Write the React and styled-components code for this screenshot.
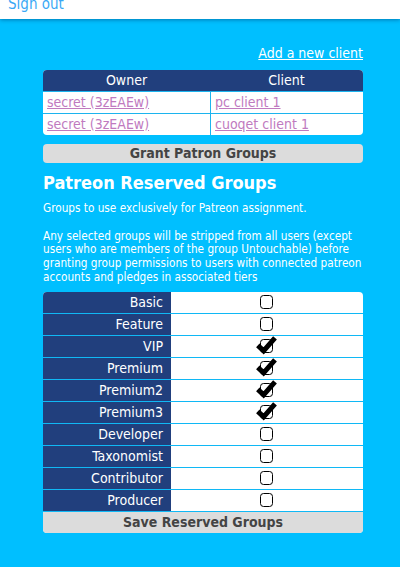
import React from "react";
import styled, { createGlobalStyle } from "styled-components";

const GlobalStyle = createGlobalStyle`
  html, body {
    margin: 0;
    padding: 0;
    background: #00bfff;
    font-family: "DejaVu Sans Condensed", "DejaVu Sans", sans-serif;
  }
`;

const Page = styled.div`
  min-height: 567px;
  background: #00bfff;
`;

const TopBar = styled.div`
  height: 19px;
  background: #ffffff;
  overflow: hidden;
  box-shadow: 0 1px 4px rgba(0, 40, 90, 0.45);
  position: relative;
`;

const SignOut = styled.a`
  display: block;
  margin-top: -5px;
  padding-left: 8px;
  font-size: 15px;
  line-height: 18px;
  color: #3aa8f5;
  text-decoration: none;
`;

const Main = styled.main`
  width: 320px;
  margin-left: 43px;
  padding-top: 26px;
`;

const LinkRow = styled.div`
  text-align: right;
  font-size: 14px;
  line-height: 17px;
  margin-bottom: 8px;
`;

const WhiteLink = styled.a`
  color: #ffffff;
  text-decoration: underline;
`;

const ClientTable = styled.div`
  display: grid;
  grid-template-columns: 167px 1fr;
  background: #ffffff;
  border-radius: 4px;
  overflow: hidden;
`;

const HeadCell = styled.div`
  background: #213f7d;
  color: #ffffff;
  height: 21px;
  font-size: 14px;
  line-height: 21px;
  text-align: center;
`;

const Cell = styled.div`
  height: 21px;
  line-height: 21px;
  font-size: 14px;
  padding-left: 4px;
  border-top: 1px solid #1cb4ee;
  border-left: ${(p) => (p.$divider ? "1px solid #1cb4ee" : "none")};
  white-space: nowrap;
`;

const PurpleLink = styled.a`
  color: #c07ac0;
  text-decoration: underline;
`;

const GrayButton = styled.button`
  display: block;
  width: 100%;
  height: 19px;
  margin-top: 9px;
  padding: 0;
  border: none;
  border-radius: 4px;
  background: #dcdcdc;
  color: #444444;
  font-family: inherit;
  font-weight: bold;
  font-size: 14px;
  line-height: 19px;
  text-align: center;
`;

const Heading = styled.h2`
  margin: 9px 0 0;
  font-size: 18px;
  line-height: 22px;
  font-weight: bold;
  color: #ffffff;
`;

const Description = styled.p`
  margin: 8px 0 0;
  color: #ffffff;
  font-size: 11.7px;
  line-height: 13.8px;
  white-space: nowrap;
`;

const GroupTable = styled.form`
  margin-top: 7px;
  background: #ffffff;
  border-radius: 4px;
  overflow: hidden;
`;

const GroupRow = styled.div`
  display: grid;
  grid-template-columns: 128px 1fr;
  height: 21px;
  border-top: ${(p) => (p.$first ? "none" : "1px solid #10b8f5")};
`;

const GroupLabel = styled.div`
  background: #213f7d;
  color: #ffffff;
  font-size: 14px;
  line-height: 21px;
  text-align: right;
  padding-right: 8px;
`;

const GroupCheck = styled.div`
  display: flex;
  align-items: center;
  justify-content: center;
`;

const SaveButton = styled.button`
  display: block;
  width: 100%;
  height: 21px;
  padding: 0;
  border: none;
  border-top: 1px solid #10b8f5;
  box-sizing: content-box;
  background: #dcdcdc;
  color: #444444;
  font-family: inherit;
  font-weight: bold;
  font-size: 14px;
  line-height: 21px;
  text-align: center;
`;

const CheckBox = ({ checked }) => (
  <svg width="22" height="20" viewBox="0 0 22 20" aria-hidden="true">
    <rect x="4.5" y="3.5" width="12" height="13" rx="3" ry="3" fill="#ffffff" stroke="#000000" strokeWidth="1" />
    {checked && (
      <path d="M1.8 9.4 L7.6 14.8 L19 1.8" fill="none" stroke="#000000" strokeWidth="5" strokeLinejoin="miter" />
    )}
  </svg>
);

const clients = [
  { owner: "secret (3zEAEw)", client: "pc client 1" },
  { owner: "secret (3zEAEw)", client: "cuoqet client 1" },
];

const groups = [
  { name: "Basic", checked: false },
  { name: "Feature", checked: false },
  { name: "VIP", checked: true },
  { name: "Premium", checked: true },
  { name: "Premium2", checked: true },
  { name: "Premium3", checked: true },
  { name: "Developer", checked: false },
  { name: "Taxonomist", checked: false },
  { name: "Contributor", checked: false },
  { name: "Producer", checked: false },
];

export default function App() {
  return (
    <Page>
      <GlobalStyle />
      <TopBar>
        <SignOut href="#">Sign out</SignOut>
      </TopBar>
      <Main>
        <LinkRow>
          <WhiteLink href="#">Add a new client</WhiteLink>
        </LinkRow>
        <ClientTable>
          <HeadCell>Owner</HeadCell>
          <HeadCell>Client</HeadCell>
          {clients.map((c, i) => (
            <React.Fragment key={i}>
              <Cell>
                <PurpleLink href="#">{c.owner}</PurpleLink>
              </Cell>
              <Cell $divider>
                <PurpleLink href="#">{c.client}</PurpleLink>
              </Cell>
            </React.Fragment>
          ))}
        </ClientTable>
        <GrayButton type="button">Grant Patron Groups</GrayButton>
        <Heading>Patreon Reserved Groups</Heading>
        <Description>
          Groups to use exclusively for Patreon assignment.
          <br />
          <br />
          Any selected groups will be stripped from all users (except
          <br />
          users who are members of the group Untouchable) before
          <br />
          granting group permissions to users with connected patreon
          <br />
          accounts and pledges in associated tiers
        </Description>
        <GroupTable>
          {groups.map((g, i) => (
            <GroupRow key={g.name} $first={i === 0}>
              <GroupLabel>{g.name}</GroupLabel>
              <GroupCheck>
                <CheckBox checked={g.checked} />
              </GroupCheck>
            </GroupRow>
          ))}
          <SaveButton type="button">Save Reserved Groups</SaveButton>
        </GroupTable>
      </Main>
    </Page>
  );
}
